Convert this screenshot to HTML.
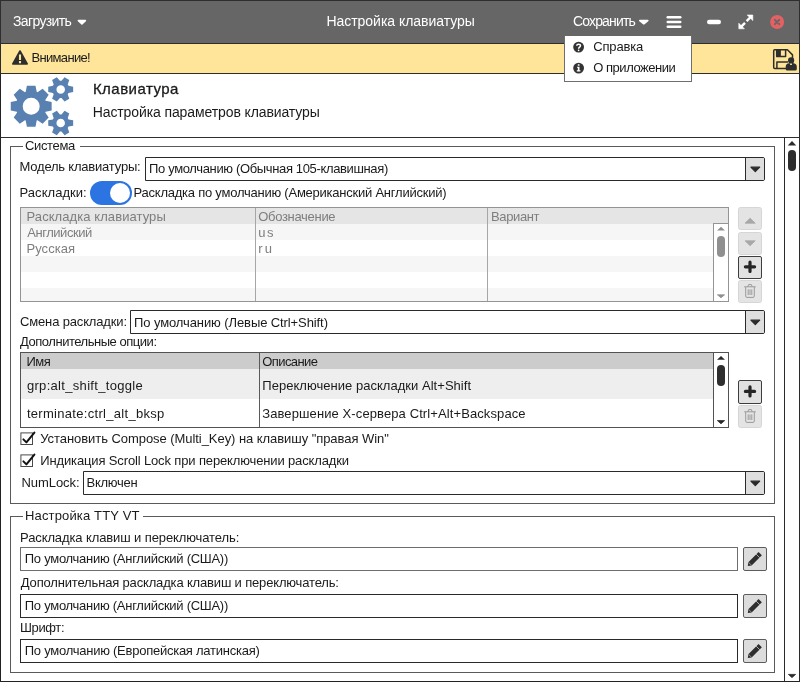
<!DOCTYPE html>
<html lang="ru">
<head>
<meta charset="utf-8">
<title>Настройка клавиатуры</title>
<style>
*{box-sizing:border-box;margin:0;padding:0}
html,body{width:800px;height:682px;overflow:hidden;background:#fff}
body{position:relative;font-family:"Liberation Sans",sans-serif;font-size:13.5px;color:#1a1a1a}
.a{position:absolute}
.t{position:absolute;white-space:nowrap;line-height:16px;height:16px}
svg{position:absolute;left:0;top:0;overflow:visible}
#tx{position:absolute;left:0;top:0;width:800px;height:682px;will-change:transform}
.sel,.inp{border:1px solid #2a2a2a;background:#fff}
.sel{border-radius:0 2px 2px 0}
.sb{background:#dedede;border-left:1px solid #2a2a2a;border-radius:0 1px 1px 0}
.bt{border:1px solid #3e3e3e;background:#e2e2e2;border-radius:2px}
.bd{border:1px solid #d6d6d6;background:#e4e4e4;border-radius:2.5px}
</style>
</head>
<body>
<div class="a" style="left:0px;top:0px;width:800px;height:44px;background:#666;border-top:1px solid #2e2e2e;border-left:1px solid #2e2e2e;border-right:1px solid #2e2e2e;border-bottom:1px solid #2c2e33"></div>
<div class="a" style="left:0px;top:44px;width:800px;height:30px;background:#ffe599;border-bottom:1px solid #2e2e2e;border-left:1px solid #2a2c33;border-right:1px solid #2a2c33"></div>
<div class="a" style="left:0px;top:74px;width:800px;height:64px;background:#fff;border-bottom:1px solid #2e2e2e;border-left:1px solid #222;border-right:1px solid #2a2a2a"></div>
<div class="a" style="left:0px;top:138px;width:800px;height:544px;border-left:1px solid #222;border-right:1px solid #2a2a2a;border-bottom:1px solid #222"></div>
<div class="a" style="left:784px;top:138px;width:1px;height:543px;background:#2a2a2a"></div>
<div class="a" style="left:10px;top:146px;width:765px;height:358px;border:1px solid #5a5a5a"></div>
<div class="a" style="left:22.5px;top:140px;width:57px;height:12px;background:#fff"></div>
<div class="a" style="left:10px;top:516px;width:765px;height:157px;border:1px solid #5a5a5a"></div>
<div class="a" style="left:22.5px;top:510px;width:120.5px;height:12px;background:#fff"></div>
<div class="a sel" style="left:145px;top:157px;width:620px;height:24px;"></div>
<div class="a sb" style="left:745px;top:158px;width:19px;height:22px;"></div>
<div class="a sel" style="left:130px;top:310px;width:635px;height:24px;"></div>
<div class="a sb" style="left:745px;top:311px;width:19px;height:22px;"></div>
<div class="a sel" style="left:83px;top:471px;width:682px;height:24px;"></div>
<div class="a sb" style="left:745px;top:472px;width:19px;height:22px;"></div>
<div class="a" style="left:90px;top:181px;width:42px;height:24px;border-radius:12px;background:#2b74e2"></div>
<div class="a" style="left:109.8px;top:182.8px;width:20.4px;height:20.4px;border-radius:50%;background:#fff"></div>
<div class="a" style="left:20px;top:207px;width:709px;height:95px;border:1px solid #949494;background:#fff"></div>
<div class="a" style="left:21px;top:208px;width:707px;height:16px;background:#e5e5e5"></div>
<div class="a" style="left:21px;top:224px;width:692px;height:16px;background:#f6f6f6"></div>
<div class="a" style="left:21px;top:256px;width:692px;height:16px;background:#f6f6f6"></div>
<div class="a" style="left:21px;top:288px;width:692px;height:13px;background:#f6f6f6"></div>
<div class="a" style="left:255px;top:208px;width:1px;height:93px;background:#a6a6a6"></div>
<div class="a" style="left:487px;top:208px;width:1px;height:93px;background:#a6a6a6"></div>
<div class="a" style="left:713px;top:223px;width:16px;height:79px;border:1px solid #949494;background:#fff"></div>
<div class="a" style="left:717px;top:235.8px;width:8px;height:21px;border-radius:4px;background:#909090"></div>
<div class="a" style="left:20px;top:352px;width:709px;height:76px;border:1px solid #525252;background:#fff"></div>
<div class="a" style="left:21px;top:353px;width:707px;height:16px;background:#ccc"></div>
<div class="a" style="left:21px;top:369px;width:692px;height:30px;background:#eee"></div>
<div class="a" style="left:259px;top:353px;width:1px;height:74px;background:#5a5a5a"></div>
<div class="a" style="left:713px;top:352px;width:16px;height:76px;border:1px solid #525252;background:#fff"></div>
<div class="a" style="left:717px;top:365px;width:8px;height:21px;border-radius:4px;background:#2e2e2e"></div>
<div class="a bd" style="left:738px;top:207px;width:24px;height:23.3px;"></div>
<div class="a bd" style="left:738px;top:231.5px;width:24px;height:23.3px;"></div>
<div class="a bt" style="left:738px;top:255.5px;width:24px;height:23.3px;"></div>
<div class="a bd" style="left:738px;top:280px;width:24px;height:23px;"></div>
<div class="a bt" style="left:738px;top:380px;width:24px;height:23.5px;"></div>
<div class="a bd" style="left:738px;top:404.8px;width:24px;height:23px;"></div>
<div class="a" style="left:20px;top:547px;width:718px;height:24px;border:1px solid #6e6e6e;background:#fff"></div>
<div class="a inp" style="left:20px;top:594px;width:718px;height:24px;"></div>
<div class="a inp" style="left:20px;top:639px;width:718px;height:24px;"></div>
<div class="a" style="left:743px;top:547px;width:24px;height:24px;border:1px solid #5c5c5c;background:#dcdcdc;border-radius:2px"></div>
<div class="a" style="left:743px;top:594px;width:24px;height:24px;border:1px solid #5c5c5c;background:#dcdcdc;border-radius:2px"></div>
<div class="a" style="left:743px;top:639px;width:24px;height:24px;border:1px solid #5c5c5c;background:#dcdcdc;border-radius:2px"></div>
<div class="a" style="left:788px;top:150px;width:8px;height:21px;border-radius:4px;background:#2e2e2e"></div>
<div class="a" style="left:564px;top:35px;width:128px;height:47px;background:#fff;border:1px solid #6e6e6e;border-top-color:#666"></div>
<svg width="800" height="682" viewBox="0 0 800 682">
<path fill="#5880b0" fill-rule="evenodd" d="M36.70 120.58 L35.50 126.65 L26.90 126.65 L25.70 120.58 L24.92 120.26 L19.78 123.70 L13.70 117.62 L17.14 112.48 L16.82 111.70 L10.75 110.50 L10.75 101.90 L16.82 100.70 L17.14 99.92 L13.70 94.78 L19.78 88.70 L24.92 92.14 L25.70 91.82 L26.90 85.75 L35.50 85.75 L36.70 91.82 L37.48 92.14 L42.62 88.70 L48.70 94.78 L45.26 99.92 L45.58 100.70 L51.65 101.90 L51.65 110.50 L45.58 111.70 L45.26 112.48 L48.70 117.62 L42.62 123.70 L37.48 120.26Z M22.70 106.20 a8.50 8.50 0 1 0 17.00 0 a8.50 8.50 0 1 0 -17.00 0Z"/>
<path fill="#5880b0" fill-rule="evenodd" d="M68.51 85.80 L73.16 86.70 L73.16 92.10 L68.51 93.00 L67.72 94.36 L69.27 98.84 L64.59 101.54 L61.49 97.96 L59.91 97.96 L56.81 101.54 L52.13 98.84 L53.68 94.36 L52.89 93.00 L48.24 92.10 L48.24 86.70 L52.89 85.80 L53.68 84.44 L52.13 79.96 L56.81 77.26 L59.91 80.84 L61.49 80.84 L64.59 77.26 L69.27 79.96 L67.72 84.44Z M56.45 89.40 a4.25 4.25 0 1 0 8.50 0 a4.25 4.25 0 1 0 -8.50 0Z"/>
<path fill="#5880b0" fill-rule="evenodd" d="M68.51 119.40 L73.16 120.30 L73.16 125.70 L68.51 126.60 L67.72 127.96 L69.27 132.44 L64.59 135.14 L61.49 131.56 L59.91 131.56 L56.81 135.14 L52.13 132.44 L53.68 127.96 L52.89 126.60 L48.24 125.70 L48.24 120.30 L52.89 119.40 L53.68 118.04 L52.13 113.56 L56.81 110.86 L59.91 114.44 L61.49 114.44 L64.59 110.86 L69.27 113.56 L67.72 118.04Z M56.45 123.00 a4.25 4.25 0 1 0 8.50 0 a4.25 4.25 0 1 0 -8.50 0Z"/>
<path fill="#fff" stroke="#fff" stroke-width="1.6" stroke-linejoin="round" d="M78.4 20.6 L85.4 20.6 L81.9 23.8Z"/>
<path fill="#fff" stroke="#fff" stroke-width="1.6" stroke-linejoin="round" d="M639.8 20.6 L647.8 20.6 L643.8 23.8Z"/>
<line x1="667.8" x2="680.2" y1="17.3" y2="17.3" stroke="#fff" stroke-width="2.6" stroke-linecap="round"/>
<line x1="667.8" x2="680.2" y1="22" y2="22" stroke="#fff" stroke-width="2.6" stroke-linecap="round"/>
<line x1="667.8" x2="680.2" y1="26.7" y2="26.7" stroke="#fff" stroke-width="2.6" stroke-linecap="round"/>
<line x1="709.2" x2="718.8" y1="22" y2="22" stroke="#fff" stroke-width="4.4" stroke-linecap="round"/>
<g fill="#fff" stroke="#fff" stroke-width="0.6" stroke-linejoin="round"><path d="M747.2 15 L752.8 15 L752.8 20.6Z"/><path d="M738.8 23.2 L738.8 28.8 L744.4 28.8Z"/></g>
<path stroke="#fff" stroke-width="2.4" fill="none" d="M750.6 17.2 L746.6 21.2 M745 22.8 L741 26.8"/>
<circle cx="777.1" cy="22" r="7" fill="#e36163"/><path stroke="#666" stroke-width="1.9" stroke-linecap="round" d="M774.9 19.8 L779.3 24.2 M779.3 19.8 L774.9 24.2"/>
<path fill="#2e2e2e" stroke="#2e2e2e" stroke-width="1.6" stroke-linejoin="round" d="M20 51 L27.2 63.9 L12.8 63.9Z"/>
<path stroke="#ffe599" stroke-width="2.1" d="M20 54.6 L20 60 M20 61.1 L20 63.2"/>
<circle cx="578.6" cy="47.1" r="5.4" fill="#333"/>
<path fill="none" stroke="#fff" stroke-width="1.5" d="M576.7 45.7 C576.9 43.6 580.6 43.7 580.5 45.8 C580.4 47.2 578.6 47 578.6 48.7"/><circle cx="578.6" cy="50.3" r="0.85" fill="#fff"/>
<circle cx="578.6" cy="68.1" r="5.4" fill="#333"/>
<path fill="#fff" d="M577.8 64.2h1.7v1.6h-1.7z M577 66.7h2.5v3.6h0.9v1.1h-3.6v-1.1h1v-2.5h-0.8z"/>
<g fill="none" stroke="#2e2e2e" stroke-width="1.5" stroke-linejoin="round"><path d="M773.7 50.8 Q773.7 49.8 774.7 49.8 L787.4 49.8 L792.5 54.9 L792.5 67.4 Q792.5 68.4 791.5 68.4 L774.7 68.4 Q773.7 68.4 773.7 67.4Z"/><path d="M776.7 50 L776.7 56.4 L785.6 56.4 L785.6 50"/><path d="M776.9 68.2 L776.9 62 L788 62"/></g>
<rect x="776.7" y="50" width="4.2" height="6.4" fill="#2e2e2e"/>
<circle cx="791.1" cy="60.4" r="3.1" fill="#2e2e2e"/><path fill="#2e2e2e" d="M785.7 67 Q785.7 63.3 789.4 63.3 L793 63.3 Q796.8 63.3 796.8 67 L796.8 69 Q796.8 70.6 795.2 70.6 L787.3 70.6 Q785.7 70.6 785.7 69Z"/><rect x="790" y="63.6" width="2" height="1.3" fill="#ffe599"/>
<path fill="#2a2a2a" stroke="#2a2a2a" stroke-width="1.2" stroke-linejoin="round" d="M750.9 167.2 L759.7 167.2 L755.3 171.6Z"/>
<path fill="#2a2a2a" stroke="#2a2a2a" stroke-width="1.2" stroke-linejoin="round" d="M750.9 320.2 L759.7 320.2 L755.3 324.6Z"/>
<path fill="#2a2a2a" stroke="#2a2a2a" stroke-width="1.2" stroke-linejoin="round" d="M750.9 481.2 L759.7 481.2 L755.3 485.6Z"/>
<path fill="#909090" stroke="#909090" stroke-width="0.8" stroke-linejoin="round" d="M717.4 294.8 L724.6 294.8 L721 297.8Z"/>
<path fill="#909090" d="M717 230.6 L725 230.6 L721 226.8Z"/>
<path fill="#2a2a2a" d="M717 359.8 L725 359.8 L721 356Z"/>
<path fill="#2a2a2a" stroke="#2a2a2a" stroke-width="0.8" stroke-linejoin="round" d="M717.4 420.6 L724.6 420.6 L721 423.8Z"/>
<path fill="#2a2a2a" d="M787.8 145.4 L796.2 145.4 L792 141Z"/>
<path fill="#2a2a2a" stroke="#2a2a2a" stroke-width="0.8" stroke-linejoin="round" d="M788.4 674.4 L795.6 674.4 L792 677.6Z"/>
<path fill="#a8a8a8" stroke="#a8a8a8" stroke-width="0.8" stroke-linejoin="round" d="M745 223.2 L755.2 223.2 L750.1 218.2Z"/>
<path fill="#a8a8a8" stroke="#a8a8a8" stroke-width="0.8" stroke-linejoin="round" d="M745 240.8 L755.2 240.8 L750.1 245.8Z"/>
<path stroke="#262626" stroke-width="3.2" stroke-linecap="round" d="M745.4 266.8 L754.6 266.8 M750 262.2 L750 271.4"/>
<path stroke="#262626" stroke-width="3.2" stroke-linecap="round" d="M745.4 391.4 L754.6 391.4 M750 386.8 L750 396"/>
<g transform="translate(744.2 284)" fill="none" stroke="#9a9a9a" stroke-width="1"><path d="M0 2.8 L11.6 2.8"/><path d="M3.6 2.8 L4.4 0.6 L7.2 0.6 L8 2.8"/><path d="M1.5 3 L1.5 12.2 Q1.5 13.4 2.7 13.4 L8.9 13.4 Q10.1 13.4 10.1 12.2 L10.1 3"/><path d="M4 5.4 L4 11 M5.8 5.4 L5.8 11 M7.6 5.4 L7.6 11"/></g>
<g transform="translate(744.2 409)" fill="none" stroke="#9a9a9a" stroke-width="1"><path d="M0 2.8 L11.6 2.8"/><path d="M3.6 2.8 L4.4 0.6 L7.2 0.6 L8 2.8"/><path d="M1.5 3 L1.5 12.2 Q1.5 13.4 2.7 13.4 L8.9 13.4 Q10.1 13.4 10.1 12.2 L10.1 3"/><path d="M4 5.4 L4 11 M5.8 5.4 L5.8 11 M7.6 5.4 L7.6 11"/></g>
<g transform="translate(743 547)"><path stroke="#2e2e2e" stroke-width="4.7" d="M7.2 16.6 L17.2 6.6"/><path fill="#2e2e2e" d="M4.8 19 L5.4 14.9 L8.9 18.4Z"/><path stroke="#dcdcdc" stroke-width="0.7" d="M13.1 7.1 L16.7 10.7"/><path stroke="#bbb" stroke-width="0.8" d="M6.3 16.4 L7.4 17.5"/></g>
<g transform="translate(743 594)"><path stroke="#2e2e2e" stroke-width="4.7" d="M7.2 16.6 L17.2 6.6"/><path fill="#2e2e2e" d="M4.8 19 L5.4 14.9 L8.9 18.4Z"/><path stroke="#dcdcdc" stroke-width="0.7" d="M13.1 7.1 L16.7 10.7"/><path stroke="#bbb" stroke-width="0.8" d="M6.3 16.4 L7.4 17.5"/></g>
<g transform="translate(743 639)"><path stroke="#2e2e2e" stroke-width="4.7" d="M7.2 16.6 L17.2 6.6"/><path fill="#2e2e2e" d="M4.8 19 L5.4 14.9 L8.9 18.4Z"/><path stroke="#dcdcdc" stroke-width="0.7" d="M13.1 7.1 L16.7 10.7"/><path stroke="#bbb" stroke-width="0.8" d="M6.3 16.4 L7.4 17.5"/></g>
<rect x="20.9" y="432.9" width="11.6" height="11.6" fill="#fff" stroke="#4a4a4a" stroke-width="1"/>
<path fill="none" stroke="#111" stroke-width="2" stroke-linecap="round" stroke-linejoin="round" d="M23.4 439.4 L26.4 442.4 L34.4 432.6"/>
<rect x="20.9" y="454.9" width="11.6" height="11.6" fill="#fff" stroke="#4a4a4a" stroke-width="1"/>
<path fill="none" stroke="#111" stroke-width="2" stroke-linecap="round" stroke-linejoin="round" d="M23.4 461.4 L26.4 464.4 L34.4 454.6"/>
</svg>
<div id="tx">
<span class="t" style="left:12.95px;top:13.00px;font-size:14px;letter-spacing:-0.631px;color:#fff;">Загрузить</span>
<span class="t" style="left:326.45px;top:13.00px;font-size:14px;letter-spacing:-0.035px;color:#fff;">Настройка клавиатуры</span>
<span class="t" style="left:572.95px;top:13.00px;font-size:14px;letter-spacing:-0.836px;color:#fff;">Сохранить</span>
<span class="t" style="left:593.19px;top:39.00px;font-size:13px;letter-spacing:-0.146px;color:#1a1a1a;">Справка</span>
<span class="t" style="left:593.23px;top:60.00px;font-size:13px;letter-spacing:-0.469px;color:#1a1a1a;">О приложении</span>
<span class="t" style="left:31.54px;top:50.00px;font-size:13px;letter-spacing:-0.678px;color:#1a1a1a;">Внимание!</span>
<span class="t" style="left:92.91px;top:81.00px;font-size:15px;letter-spacing:0.478px;color:#1a1a1a;-webkit-text-stroke:0.3px #1a1a1a;">Клавиатура</span>
<span class="t" style="left:92.70px;top:104.00px;font-size:14px;letter-spacing:-0.104px;color:#1a1a1a;">Настройка параметров клавиатуры</span>
<span class="t" style="left:25.02px;top:138.00px;font-size:13px;letter-spacing:-0.351px;color:#1a1a1a;">Система</span>
<span class="t" style="left:19.54px;top:159.00px;font-size:13px;letter-spacing:-0.209px;color:#1a1a1a;">Модель клавиатуры:</span>
<span class="t" style="left:149.03px;top:161.00px;font-size:13px;letter-spacing:-0.354px;color:#1a1a1a;">По умолчанию (Обычная 105-клавишная)</span>
<span class="t" style="left:19.54px;top:185.00px;font-size:13px;letter-spacing:0.042px;color:#1a1a1a;">Раскладки:</span>
<span class="t" style="left:133.53px;top:185.00px;font-size:13px;letter-spacing:-0.235px;color:#1a1a1a;">Раскладка по умолчанию (Американский Английский)</span>
<span class="t" style="left:26.52px;top:209.00px;font-size:13px;letter-spacing:0.076px;color:#7e7e7e;">Раскладка клавиатуры</span>
<span class="t" style="left:258.22px;top:209.00px;font-size:13px;letter-spacing:-0.305px;color:#7e7e7e;">Обозначение</span>
<span class="t" style="left:491.02px;top:209.00px;font-size:13px;letter-spacing:-0.367px;color:#7e7e7e;">Вариант</span>
<span class="t" style="left:27.20px;top:225.00px;font-size:13px;letter-spacing:-0.448px;color:#7e7e7e;">Английский</span>
<span class="t" style="left:258.22px;top:225.00px;font-size:13px;letter-spacing:1.621px;color:#7e7e7e;">us</span>
<span class="t" style="left:26.52px;top:241.00px;font-size:13px;letter-spacing:0.037px;color:#7e7e7e;">Русская</span>
<span class="t" style="left:258.22px;top:241.00px;font-size:13px;letter-spacing:2.192px;color:#7e7e7e;">ru</span>
<span class="t" style="left:20.02px;top:314.00px;font-size:13px;letter-spacing:-0.156px;color:#1a1a1a;">Смена раскладки:</span>
<span class="t" style="left:134.03px;top:315.00px;font-size:13px;letter-spacing:-0.097px;color:#1a1a1a;">По умолчанию (Левые Ctrl+Shift)</span>
<span class="t" style="left:20.02px;top:334.00px;font-size:13px;letter-spacing:-0.469px;color:#1a1a1a;">Дополнительные опции:</span>
<span class="t" style="left:26.52px;top:354.00px;font-size:13px;letter-spacing:-0.537px;color:#1a1a1a;">Имя</span>
<span class="t" style="left:262.22px;top:354.00px;font-size:13px;letter-spacing:-0.582px;color:#1a1a1a;">Описание</span>
<span class="t" style="left:26.92px;top:378.00px;font-size:13px;letter-spacing:0.316px;color:#1a1a1a;">grp:alt_shift_toggle</span>
<span class="t" style="left:262.25px;top:378.00px;font-size:13px;letter-spacing:0.034px;color:#1a1a1a;">Переключение раскладки Alt+Shift</span>
<span class="t" style="left:26.92px;top:406.00px;font-size:13px;letter-spacing:0.301px;color:#1a1a1a;">terminate:ctrl_alt_bksp</span>
<span class="t" style="left:262.22px;top:406.00px;font-size:13px;letter-spacing:0.103px;color:#1a1a1a;">Завершение X-сервера Ctrl+Alt+Backspace</span>
<span class="t" style="left:40.27px;top:431.00px;font-size:13px;letter-spacing:-0.058px;color:#1a1a1a;">Установить Compose (Multi_Key) на клавишу &quot;правая Win&quot;</span>
<span class="t" style="left:40.27px;top:453.00px;font-size:13px;letter-spacing:-0.140px;color:#1a1a1a;">Индикация Scroll Lock при переключении раскладки</span>
<span class="t" style="left:21.52px;top:475.00px;font-size:13px;letter-spacing:-0.075px;color:#1a1a1a;">NumLock:</span>
<span class="t" style="left:86.53px;top:475.00px;font-size:13px;letter-spacing:-0.249px;color:#1a1a1a;">Включен</span>
<span class="t" style="left:25.02px;top:508.00px;font-size:13px;letter-spacing:0.149px;color:#1a1a1a;">Настройка TTY VT</span>
<span class="t" style="left:20.02px;top:530.00px;font-size:13px;letter-spacing:-0.107px;color:#1a1a1a;">Раскладка клавиш и переключатель:</span>
<span class="t" style="left:24.77px;top:551.00px;font-size:13px;letter-spacing:-0.269px;color:#1a1a1a;">По умолчанию (Английский (США))</span>
<span class="t" style="left:20.82px;top:575.00px;font-size:13px;letter-spacing:-0.165px;color:#1a1a1a;">Дополнительная раскладка клавиш и переключатель:</span>
<span class="t" style="left:24.77px;top:598.00px;font-size:13px;letter-spacing:-0.269px;color:#1a1a1a;">По умолчанию (Английский (США))</span>
<span class="t" style="left:20.02px;top:620.00px;font-size:13px;letter-spacing:-0.377px;color:#1a1a1a;">Шрифт:</span>
<span class="t" style="left:24.77px;top:643.00px;font-size:13px;letter-spacing:-0.251px;color:#1a1a1a;">По умолчанию (Европейская латинская)</span>
</div>
</body>
</html>
